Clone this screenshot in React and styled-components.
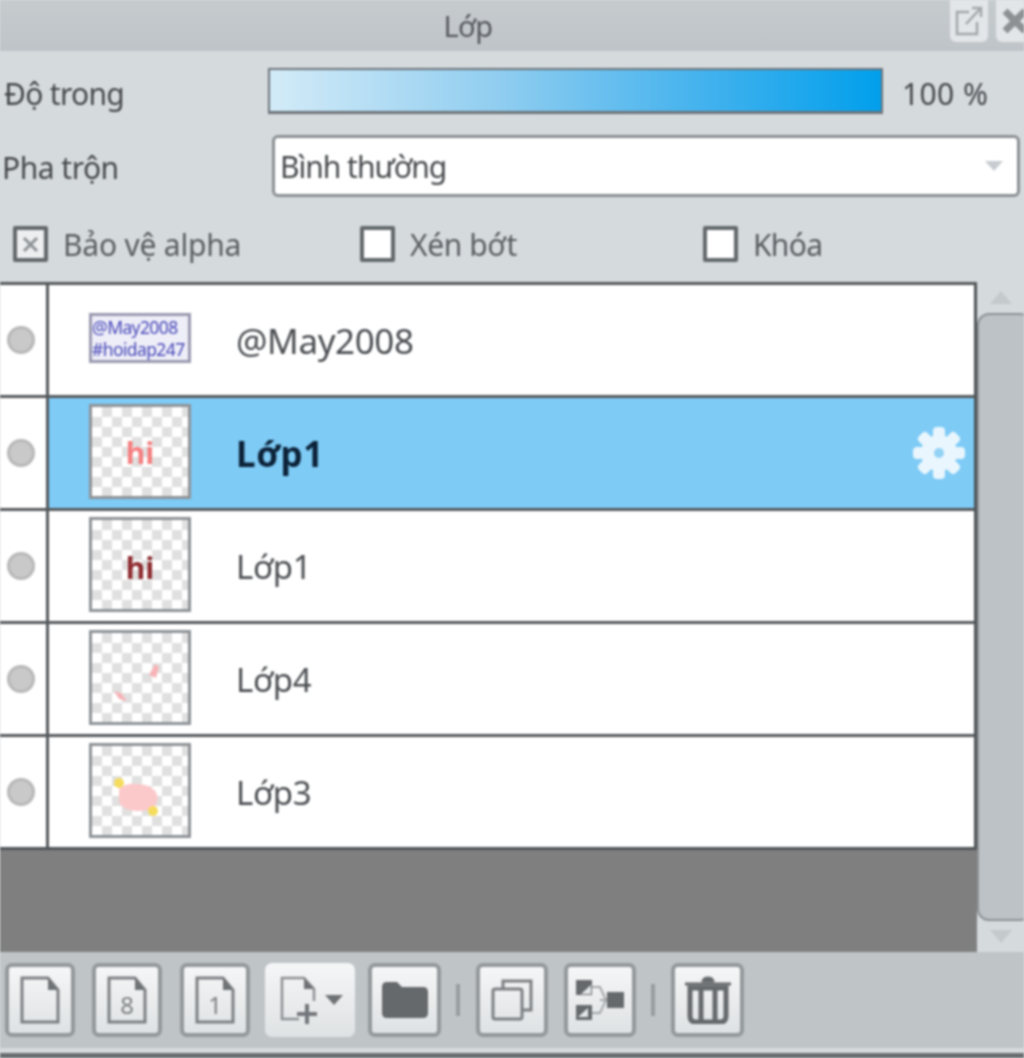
import React from 'react';
import styled, { createGlobalStyle } from 'styled-components';

const GlobalStyle = createGlobalStyle`
  html, body { margin: 0; padding: 0; background: #d5dadd; }
  * { box-sizing: border-box; }
`;

const Panel = styled.div`
  width: 1024px;
  height: 1058px;
  overflow: hidden;
  display: flex;
  flex-direction: column;
  background: #d5dadd;
  color: #45484b;
  font-family: "Noto Sans", "Open Sans", sans-serif;
  font-size: 30px;
  filter: blur(0.8px);
`;

const TitleBar = styled.div`
  height: 51px;
  flex: none;
  display: flex;
  background: linear-gradient(#c6cbce, #bfc4c8);
`;

const Title = styled.div`
  flex: 1;
  text-align: center;
  line-height: 52px;
  font-size: 29px;
  letter-spacing: -0.6px;
  color: #54585b;
`;

const WindowButtons = styled.div`
  width: 102px;
  flex: none;
  display: flex;
  gap: 8px;
  padding-left: 14px;
  margin-right: -14px;
`;

const WindowButton = styled.div`
  width: 38px;
  height: 42px;
  flex: none;
  display: flex;
  align-items: center;
  justify-content: center;
  background: #e3e6e8;
  border-radius: 0 0 6px 6px;
`;

const OpacityRow = styled.div`
  height: 46px;
  margin-top: 17px;
  flex: none;
  display: flex;
  align-items: center;
  padding-left: 4px;
`;

const Label = styled.div`
  width: ${(props) => props.$width}px;
  flex: none;
  padding-top: ${(props) => props.$drop || 0}px;
  letter-spacing: ${(props) => props.$spacing}px;
  white-space: nowrap;
`;

const OpacityBar = styled.div`
  width: 615px;
  height: 46px;
  flex: none;
  border: 2px solid #6d7479;
  border-bottom-width: 3px;
  background: linear-gradient(90deg, #d3ebf8 0%, #8fcdf0 38%, #45b3ee 70%, #019fec 100%);
`;

const OpacityValue = styled.div`
  margin-left: 19px;
  padding-top: 5px;
  letter-spacing: 0.4px;
  white-space: nowrap;
`;

const BlendRow = styled.div`
  height: 62px;
  margin-top: 21px;
  flex: none;
  display: flex;
  align-items: center;
  padding-left: 2px;
`;

const Select = styled.div`
  width: 748px;
  height: 62px;
  flex: none;
  display: flex;
  align-items: center;
  justify-content: space-between;
  padding: 0 14px 0 5px;
  background: #fff;
  border: 3px solid #8b9094;
  border-radius: 6px;
  letter-spacing: -1px;
`;

const Caret = styled.div`
  width: 0;
  height: 0;
  border-left: 9px solid transparent;
  border-right: 9px solid transparent;
  border-top: 10px solid #c8ccd0;
`;

const CheckRow = styled.div`
  height: 36px;
  margin-top: 29px;
  margin-bottom: 20px;
  flex: none;
  display: flex;
  padding-left: 13px;
`;

const CheckItem = styled.div`
  width: ${(props) => props.$width}px;
  flex: none;
  display: flex;
  align-items: center;
  gap: 15px;
  letter-spacing: ${(props) => props.$spacing}px;
  font-size: 30px;
  color: #595d60;
  white-space: nowrap;
`;

const CheckBox = styled.div`
  width: 35px;
  height: 36px;
  flex: none;
  display: flex;
  align-items: center;
  justify-content: center;
  background: ${(props) => (props.$checked ? '#eceef0' : '#fff')};
  border: 4px solid #63686b;
  border-radius: 2px;
`;

const Middle = styled.div`
  height: 670px;
  flex: none;
  display: flex;
`;

const LayerArea = styled.div`
  width: 977px;
  flex: none;
  display: flex;
  flex-direction: column;
  background: #7f7f7f;
  border-top: 3px solid #55595c;
`;

const LayerList = styled.div`
  display: flex;
  flex-direction: column;
  background: #fff;
  border-right: 3px solid #4f5457;
  border-bottom: 3px solid #4f5457;
`;

const Row = styled.div`
  height: ${(props) => (props.$first ? 110 : 113)}px;
  flex: none;
  display: flex;
  border-top: ${(props) => (props.$first ? 'none' : '3px solid #55595c')};
`;

const VisibleCell = styled.div`
  width: 49px;
  flex: none;
  display: flex;
  align-items: center;
  padding-left: 7px;
  border-right: 3px solid #55595c;
`;

const Dot = styled.div`
  width: 28px;
  height: 28px;
  border-radius: 50%;
  background: #c9c9c9;
  border: 3px solid #b8b8b8;
`;

const RowBody = styled.div`
  flex: 1;
  min-width: 0;
  display: flex;
  align-items: center;
  padding-left: 40px;
  background: ${(props) => (props.$selected ? '#7ecbf6' : '#fff')};
`;

const Thumb = styled.div`
  width: 102px;
  height: ${(props) => (props.$short ? 50 : 95)}px;
  flex: none;
  position: relative;
  overflow: hidden;
  margin-bottom: 4px;
  border: 3px solid #8f9396;
  border-color: ${(props) => (props.$short ? '#9a9ab0' : '#8f9396')};
  background-color: ${(props) => (props.$short ? '#eeeef8' : '#fff')};
  background-image: ${(props) => (props.$short
    ? 'none'
    : `linear-gradient(45deg, #e0e0e0 25%, transparent 25%, transparent 75%, #e0e0e0 75%),
       linear-gradient(45deg, #e0e0e0 25%, transparent 25%, transparent 75%, #e0e0e0 75%)`)};
  background-size: 20px 20px;
  background-position: 0 0, 10px 10px;
`;

const ThumbText = styled.div`
  font-size: 17.5px;
  line-height: 22px;
  letter-spacing: -0.6px;
  white-space: nowrap;
  color: #4747b8;
`;

const ThumbArt = styled.svg`
  position: absolute;
  left: 0;
  top: 0;
  width: 96px;
  height: 89px;
`;

const LayerName = styled.div`
  margin-left: 45px;
  flex: 1;
  font-size: ${(props) => props.$size}px;
  font-weight: ${(props) => (props.$selected ? 700 : 400)};
  color: ${(props) => (props.$selected ? '#0c2238' : '#4a4d51')};
  letter-spacing: ${(props) => (props.$selected ? 0.6 : -0.4)}px;
`;

const GearIcon = styled.svg`
  width: 54px;
  height: 54px;
  flex: none;
  margin-right: 8px;
`;

const Scroll = styled.div`
  flex: 1;
  display: flex;
  flex-direction: column;
  background: #d5dadd;
`;

const ScrollArrow = styled.div`
  height: 31px;
  flex: none;
  display: flex;
  align-items: center;
  justify-content: center;
`;

const ArrowMark = styled.div`
  width: 0;
  height: 0;
  border-left: 11px solid transparent;
  border-right: 11px solid transparent;
  ${(props) => (props.$up ? 'border-bottom' : 'border-top')}: 13px solid #c4c9cc;
`;

const ScrollThumb = styled.div`
  flex: 1;
  margin-right: -8px;
  background: #bdc2c6;
  border: 2px solid #8c9195;
  border-radius: 12px;
`;

const Footer = styled.div`
  height: 96px;
  flex: none;
  display: flex;
  align-items: center;
  padding: 0 0 0 5px;
  background: #bfc4c7;
`;

const ToolButton = styled.div`
  width: ${(props) => props.$width || 70}px;
  height: 74px;
  flex: none;
  display: flex;
  align-items: center;
  justify-content: center;
  gap: 4px;
  margin-left: ${(props) => props.$before || 0}px;
  background: linear-gradient(#f5f6f7, #dfe2e4);
  border: ${(props) => (props.$flat ? 'none' : '4px solid #93989b')};
  border-radius: 7px;
`;

const Separator = styled.div`
  width: 4px;
  height: 32px;
  flex: none;
  margin: 0 16px 0 15px;
  background: #989da0;
`;

const Strip = styled.div`
  flex: 1;
  display: flex;
  flex-direction: column;
`;

const StripLight = styled.div`
  height: 5px;
  background: #d7dadc;
`;

const StripDark = styled.div`
  flex: 1;
  background: #686c6f;
`;

const iconGrey = '#7d8083';

const FileIcon = ({ digit, plus }) => (
  <svg width="44" height="50" viewBox="0 0 44 50" fill="none">
    {plus ? (
      <path d="M22 44H5V3h22l10 11v12" stroke="#8d9093" strokeWidth="2.5" />
    ) : (
      <path d="M4 3h26l10 12v32H4z" stroke={iconGrey} strokeWidth="3" />
    )}
    <path d={plus ? 'M27 3v11h10z' : 'M30 3v12h10z'} fill="#6f7275" />
    {digit && (
      <text x="22" y="39" textAnchor="middle" fontSize="24" fontFamily="Noto Sans" fill={iconGrey}>
        {digit}
      </text>
    )}
    {plus && <path d="M30 29v20M20 39h20" stroke="#73767a" strokeWidth="4" />}
  </svg>
);

const Checker = ({ children }) => (
  <Thumb>
    <ThumbArt viewBox="0 0 96 89">{children}</ThumbArt>
  </Thumb>
);

const gearTeeth = [0, 45, 90, 135, 180, 225, 270, 315];

const Gear = () => (
  <GearIcon viewBox="0 0 54 54">
    <g fill="#eaf6fd">
      {gearTeeth.map((angle) => (
        <rect key={angle} x="21" y="1" width="12" height="14" rx="4" transform={`rotate(${angle} 27 27)`} />
      ))}
      <circle cx="27" cy="27" r="18" />
    </g>
    <circle cx="27" cy="27" r="5" fill="#92d2f5" />
  </GearIcon>
);

const App = () => (
  <>
    <GlobalStyle />
    <Panel>
      <TitleBar>
        <Title>Lớp</Title>
        <WindowButtons>
          <WindowButton>
            <svg width="30" height="32" viewBox="0 0 30 32" fill="none" stroke="#a3a7aa" strokeWidth="2.5">
              <path d="M15 7H3v22h20V17" />
              <path d="M12 19L26 4M18 3h9v9" />
            </svg>
          </WindowButton>
          <WindowButton>
            <svg width="28" height="28" viewBox="0 0 28 28" stroke="#8d9194" strokeWidth="7">
              <path d="M4 4l20 20M24 4L4 24" />
            </svg>
          </WindowButton>
        </WindowButtons>
      </TitleBar>

      <OpacityRow>
        <Label $width={264} $drop={5} $spacing={-0.7}>Độ trong</Label>
        <OpacityBar />
        <OpacityValue>100 %</OpacityValue>
      </OpacityRow>

      <BlendRow>
        <Label $width={270} $drop={2} $spacing={-0.5}>Pha trộn</Label>
        <Select>
          Bình thường
          <Caret />
        </Select>
      </BlendRow>

      <CheckRow>
        <CheckItem $width={347} $spacing={-0.2}>
          <CheckBox $checked>
            <svg width="19" height="19" viewBox="0 0 19 19" fill="none" stroke="#8f9396" strokeWidth="3">
              <path d="M3 3l13 13M16 3L3 16" />
            </svg>
          </CheckBox>
          Bảo vệ alpha
        </CheckItem>
        <CheckItem $width={343} $spacing={-0.4}>
          <CheckBox />
          Xén bớt
        </CheckItem>
        <CheckItem $width={200} $spacing={-0.7}>
          <CheckBox />
          Khóa
        </CheckItem>
      </CheckRow>

      <Middle>
        <LayerArea>
          <LayerList>
            <Row $first>
              <VisibleCell><Dot /></VisibleCell>
              <RowBody>
                <Thumb $short>
                  <ThumbText>@May2008</ThumbText>
                  <ThumbText>#hoidap247</ThumbText>
                </Thumb>
                <LayerName $size={35}>@May2008</LayerName>
              </RowBody>
            </Row>
            <Row>
              <VisibleCell><Dot /></VisibleCell>
              <RowBody $selected>
                <Checker>
                  <text x="48" y="57" textAnchor="middle" fontSize="30" fontWeight="700" fontFamily="Noto Sans" fill="#f57f80">hi</text>
                </Checker>
                <LayerName $selected $size={35}>Lớp1</LayerName>
                <Gear />
              </RowBody>
            </Row>
            <Row>
              <VisibleCell><Dot /></VisibleCell>
              <RowBody>
                <Checker>
                  <text x="48" y="59" textAnchor="middle" fontSize="30" fontWeight="700" fontFamily="Noto Sans" fill="#8e2c30">hi</text>
                </Checker>
                <LayerName $size={33}>Lớp1</LayerName>
              </RowBody>
            </Row>
            <Row>
              <VisibleCell><Dot /></VisibleCell>
              <RowBody>
                <Checker>
                  <path d="M57 42l6-11 4 3-3 11z" fill="#f7b4b8" />
                  <path d="M22 58l7 2 6 8-8-2z" fill="#f7b4b8" />
                </Checker>
                <LayerName $size={33}>Lớp4</LayerName>
              </RowBody>
            </Row>
            <Row>
              <VisibleCell><Dot /></VisibleCell>
              <RowBody>
                <Checker>
                  <path d="M27 43c6-7 20-6 29-3 7 3 11 8 9 16-3 8-12 9-20 9-9 0-17-4-18-10z" fill="#fcc9cb" />
                  <circle cx="27" cy="37" r="5" fill="#f5dc5d" />
                  <circle cx="61" cy="65" r="5" fill="#f5dc5d" />
                </Checker>
                <LayerName $size={33}>Lớp3</LayerName>
              </RowBody>
            </Row>
          </LayerList>
        </LayerArea>
        <Scroll>
          <ScrollArrow><ArrowMark $up /></ScrollArrow>
          <ScrollThumb />
          <ScrollArrow><ArrowMark /></ScrollArrow>
        </Scroll>
      </Middle>

      <Footer>
        <ToolButton><FileIcon /></ToolButton>
        <ToolButton $before={17}><FileIcon digit="8" /></ToolButton>
        <ToolButton $before={18}><FileIcon digit="1" /></ToolButton>
        <ToolButton $flat $width={90} $before={15}>
          <FileIcon plus />
          <svg width="18" height="10" viewBox="0 0 18 10"><path d="M0 0h18L9 10z" fill="#6f7275" /></svg>
        </ToolButton>
        <ToolButton $width={73} $before={13}>
          <svg width="46" height="36" viewBox="0 0 46 36">
            <path d="M0 5q0-5 5-5h10l5 5h21q5 0 5 5v21q0 5-5 5H5q-5 0-5-5z" fill="#66696c" />
          </svg>
        </ToolButton>
        <Separator />
        <ToolButton $width={72}>
          <svg width="42" height="42" viewBox="0 0 42 42" fill="none" stroke={iconGrey} strokeWidth="3">
            <path d="M12 9V2h28v29h-9" />
            <rect x="2" y="10" width="29" height="30" rx="2" />
          </svg>
        </ToolButton>
        <ToolButton $width={72} $before={16}>
          <svg width="50" height="42" viewBox="0 0 50 42" fill="none">
            <rect x="1" y="1" width="16" height="15" fill="#66696c" />
            <rect x="1" y="26" width="16" height="15" fill="#66696c" />
            <path d="M6 15l10-9v9zM3 38l10-9v9z" fill="#e4e6e8" />
            <path d="M17 8h8l6 13-6 13h-8M25 21h7" stroke="#a4a7aa" strokeWidth="2" />
            <rect x="32" y="13" width="17" height="16" fill="#66696c" />
          </svg>
        </ToolButton>
        <Separator />
        <ToolButton $width={73}>
          <svg width="48" height="48" viewBox="0 0 48 48" fill="none" stroke="#66696c">
            <path d="M1 8h46" strokeWidth="3" />
            <path d="M18 6q0-5 6-5t6 5z" fill="#66696c" strokeWidth="1" />
            <path d="M6 12h36v28q0 6-6 6H12q-6 0-6-6z" strokeWidth="5" />
            <path d="M17 14v30M31 14v30" strokeWidth="5" />
          </svg>
        </ToolButton>
      </Footer>
      <Strip>
        <StripLight />
        <StripDark />
      </Strip>
    </Panel>
  </>
);

export default App;
